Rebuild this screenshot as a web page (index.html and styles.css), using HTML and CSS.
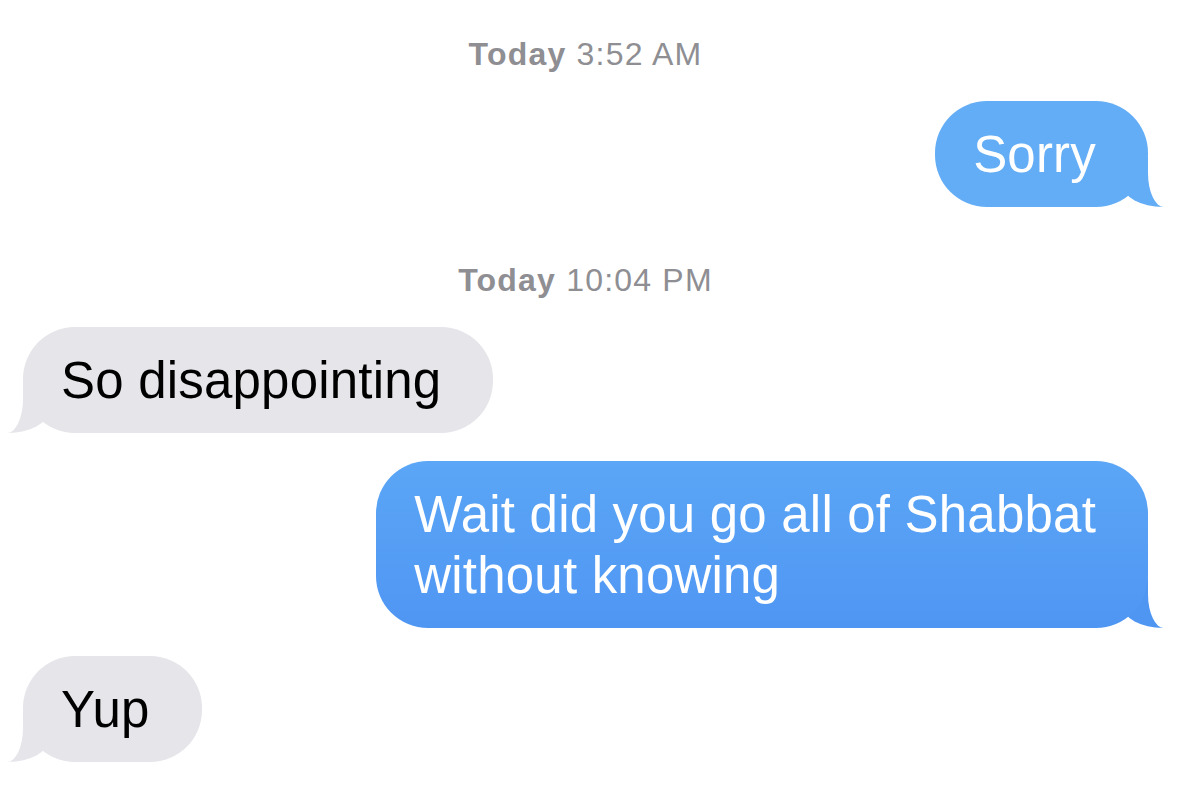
FILE: index.html
```html
<!DOCTYPE html>
<html lang="en">
<head>
    <meta charset="UTF-8">
    <meta name="viewport" content="width=device-width, initial-scale=1.0">
    <title>Messages</title>
    <link rel="stylesheet" href="styles.css">
</head>
<body>
    <div class="chat">
        <div class="stamp"><b>Today</b> 3:52 AM</div>
        <div class="bubble sent light">Sorry</div>

        <div class="stamp"><b>Today</b> 10:04 PM</div>
        <div class="bubble received">So disappointing</div>
        <div class="bubble sent deep">Wait did you go all of Shabbat<br>without knowing</div>
        <div class="bubble received">Yup</div>
    </div>
</body>
</html>
```

FILE: styles.css
```css
body {
    margin: 0;
    background-color: #ffffff;
    font-family: "Liberation Sans", Arial, sans-serif;
    overflow-x: hidden;
}
.chat {
    display: flex;
    flex-direction: column;
    padding: 34px 35px 0 23px;
}
.stamp {
    align-self: center;
    font-size: 32px;
    line-height: 40px;
    letter-spacing: 1.2px;
    color: #8e8e93;
    margin: 25px 0 27px;
}
.stamp:first-child {
    margin-top: 0;
}
.stamp b {
    font-weight: 700;
}
.bubble {
    position: relative;
    font-size: 51px;
    line-height: 61px;
    letter-spacing: 0.2px;
    padding: 23px 52px 22px 38px;
    border-radius: 52px;
    margin-bottom: 28px;
}
/* tail pieces sit under the bubble */
.bubble::before,
.bubble::after {
    content: "";
    position: absolute;
    bottom: 0;
    z-index: -1;
}

/* outgoing, tail on the right */
.sent {
    align-self: flex-end;
    color: #ffffff;
    background-color: #63adf6;
}
.sent.deep {
    background: linear-gradient(#5ba6f6, #4f96f3);
}
.sent::before {
    right: -15px;
    width: 40px;
    height: 50px;
    background-color: #63adf6;
    border-bottom-left-radius: 40px 22px;
}
.sent.deep::before {
    background-color: #4f96f3;
}
.sent::after {
    right: -62px;
    width: 62px;
    height: 60px;
    background-color: #ffffff;
    border-bottom-left-radius: 16px 34px;
}

/* incoming, tail on the left */
.received {
    align-self: flex-start;
    color: #000000;
    background-color: #e5e5ea;
}
.received::before {
    left: -15px;
    width: 40px;
    height: 50px;
    background-color: #e5e5ea;
    border-bottom-right-radius: 40px 22px;
}
.received::after {
    left: -62px;
    width: 62px;
    height: 60px;
    background-color: #ffffff;
    border-bottom-right-radius: 16px 34px;
}
```
